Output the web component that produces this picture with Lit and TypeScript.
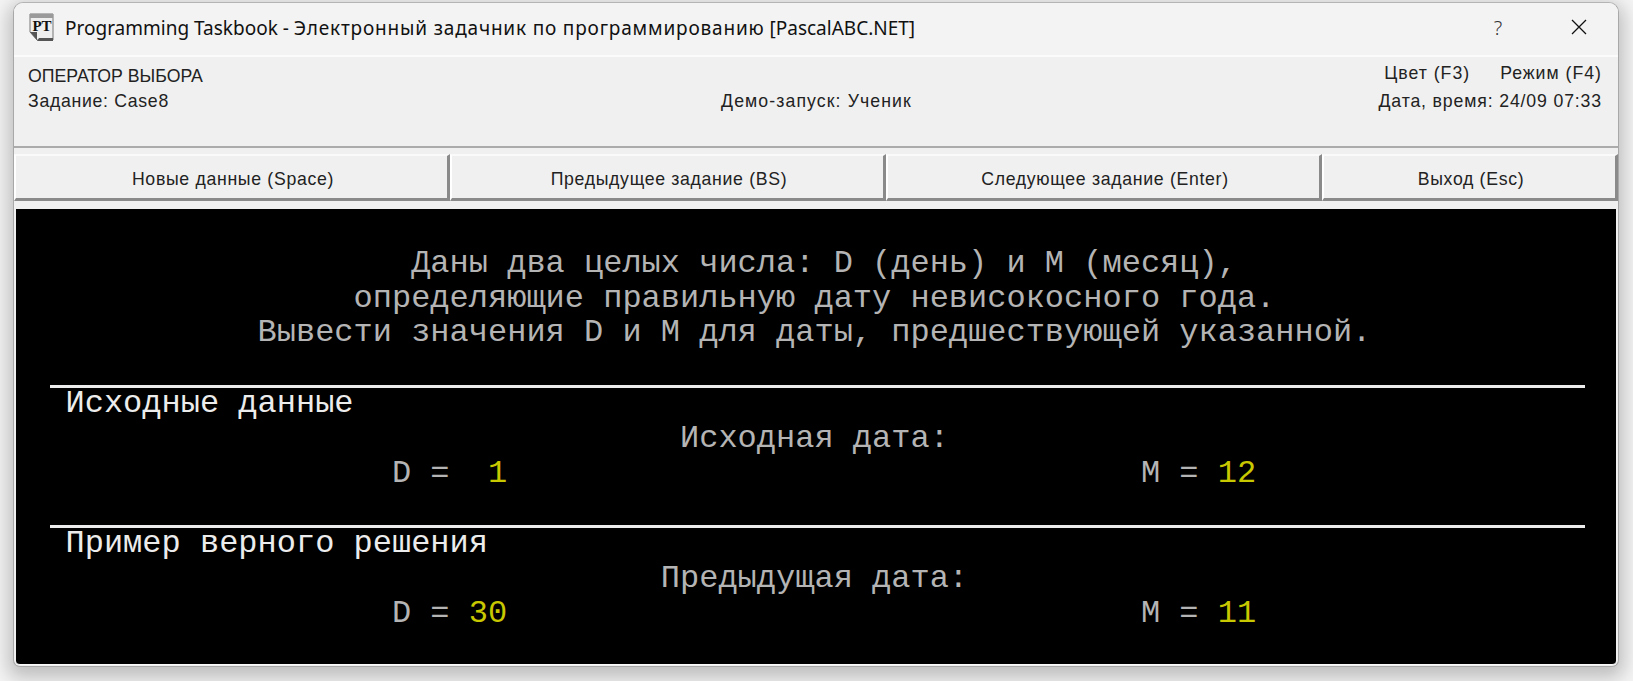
import { LitElement, html, css } from "lit";
import { customElement } from "lit/decorators.js";

@customElement("app-root")
export class AppRoot extends LitElement {
  static styles = css`
    :host { display: block; height: 681px; overflow: hidden; background: #f4f4f4; padding: 2px 14px 0 13px; box-sizing: border-box; font-family: "Liberation Sans", Arial, sans-serif; }
    .win { height: 665px; box-sizing: border-box; background: #f0f0f0; border: 1px solid #a8a8a8; border-top-color: #b4b4b4; border-radius: 10px 10px 7px 7px; box-shadow: 0 6px 18px 5px rgba(0,0,0,.22); overflow: hidden; display: flex; flex-direction: column; }
    .title { height: 54px; flex: none; background: #f3f3f3; display: flex; align-items: center; padding: 0 0 0 15px; border-bottom: 2px solid #fbfbfb; box-sizing: border-box; }
    .title svg.ic { width: 25px; height: 29px; flex: none; margin-top: -3px; }
    .cap { margin-left: 11px; font: 19px "Noto Sans", "Open Sans", sans-serif; color: #111; white-space: nowrap; flex: 1; margin-top: -3px; }
    .cy { letter-spacing: .82px; }
    .q { font: 20px "Noto Sans", sans-serif; font-weight: 300; color: #333; width: 20px; margin-right: 62.5px; text-align: center; margin-top: -3px; }
    .x { width: 16px; height: 16px; margin-right: 31.5px; margin-top: -5px; flex: none; }
    .info { height: 91px; flex: none; box-sizing: border-box; border-bottom: 2px solid #ababab; padding: 6.5px 16px 0 14px; display: grid; grid-template-columns: 1fr 1fr 1fr; font-size: 17.7px; color: #222; line-height: 25px; letter-spacing: .7px; }
    .up { letter-spacing: 0; }
    .mid { padding-top: 25px; text-align: center; white-space: nowrap; margin-right: -3px; letter-spacing: 1.1px; }
    .right { line-height: 28px; margin-top: -4.5px; white-space: nowrap; letter-spacing: .85px; }
    .keys { display: flex; justify-content: flex-end; gap: 30px; letter-spacing: 1px; }
    .date { text-align: right; }
    .btns { margin-top: 6px; height: 47px; flex: none; display: grid; grid-template-columns: 436px 436px 436px 1fr; }
    .btn { box-sizing: border-box; display: flex; align-items: center; justify-content: center; font-size: 17.7px; letter-spacing: .68px; color: #222; background: #f0f0f0; border-top: 2px solid #fafafa; border-left: 2px solid #fff; border-right: 3px solid #8a8a8a; border-bottom: 3px solid #8a8a8a; padding: 4px 0 0 3px; }
    .con { margin: 8px 2px 1px 2px; flex: 1; background: #000; border-bottom: 1px solid #fafafa; border-radius: 0 0 4px 4px; padding: 38px 31px 0 34px; display: flex; flex-direction: column; font: 32px/35px "Liberation Mono", "Courier New", monospace; color: #b4b4b4; }
    .block { padding-left: 15.5px; }
    .block div { white-space: pre; }
    .lead { line-height: 34.6px; }
    .rule { height: 3px; background: #ececec; flex: none; }
    .h { color: #ececec; }
    .y { color: #c8c800; }
    .r1 { margin-top: 34px; }
    .r2 { margin-top: 34px; }
    .s { margin-top: -2px; }
  `;

  render() {
    return html`<div class="win">
      <div class="title">
        <svg class="ic" viewBox="0 0 25 29">
          <path d="M1 1H24V27H8L1 19Z" fill="#eee" stroke="#777" />
          <path d="M1 1H24V5H1Z" fill="#9a9a9a" />
          <path d="M1 19L8 27V19Z" fill="#555" />
          <path d="M8 28H24V25H10Z" fill="#555" />
          <text x="13" y="18" text-anchor="middle" font-family="Liberation Serif" font-weight="700" font-size="15" fill="#111">PT</text>
        </svg>
        <div class="cap">Programming Taskbook - <span class="cy">Электронный задачник по программированию</span> [PascalABC.NET]</div>
        <div class="q">?</div>
        <svg class="x" viewBox="0 0 16 16"><path d="M1 1L15 15M15 1L1 15" stroke="#111" stroke-width="1.3" fill="none" /></svg>
      </div>
      <div class="info">
        <div><span class="up">ОПЕРАТОР ВЫБОРА</span><br />Задание: Case8</div>
        <div class="mid">Демо-запуск: Ученик</div>
        <div class="right">
          <div class="keys"><span>Цвет (F3)</span><span>Режим (F4)</span></div>
          <div class="date">Дата, время: 24/09 07:33</div>
        </div>
      </div>
      <div class="btns">
        <div class="btn">Новые данные (Space)</div>
        <div class="btn">Предыдущее задание (BS)</div>
        <div class="btn">Следующее задание (Enter)</div>
        <div class="btn">Выход (Esc)</div>
      </div>
      <div class="con">
        <div class="block lead">
          <div>${"                  Даны два целых числа: D (день) и M (месяц),"}</div>
          <div>${"               определяющие правильную дату невисокосного года."}</div>
          <div>${"          Вывести значения D и M для даты, предшествующей указанной."}</div>
        </div>
        <div class="rule r1"></div>
        <div class="block s">
          <div class="h">Исходные данные</div>
          <div>${"                                Исходная дата:"}</div>
          <div>${"                 D =  "}<span class="y">1</span>${"                                 M = "}<span class="y">12</span></div>
        </div>
        <div class="rule r2"></div>
        <div class="block s">
          <div class="h">Пример верного решения</div>
          <div>${"                               Предыдущая дата:"}</div>
          <div>${"                 D = "}<span class="y">30</span>${"                                 M = "}<span class="y">11</span></div>
        </div>
      </div>
    </div>`;
  }
}
